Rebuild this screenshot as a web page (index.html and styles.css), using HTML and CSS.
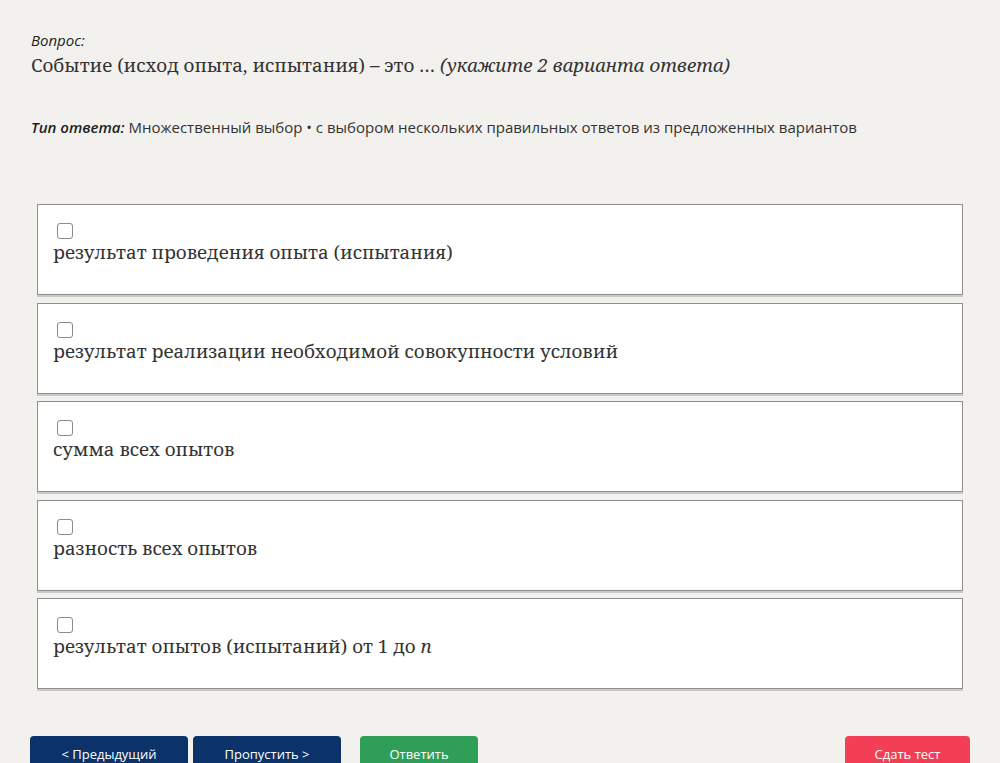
FILE: index.html
```html
<!DOCTYPE html>
<html lang="ru">
<head>
<meta charset="utf-8">
<link rel="stylesheet" href="styles.css">
</head>
<body>
<div class="page">
  <div class="q-label">Вопрос:</div>
  <div class="q-text">Событие (исход опыта, испытания) – это … <em>(укажите 2 варианта ответа)</em></div>
  <div class="q-type"><em>Тип ответа:</em> Множественный выбор • с выбором нескольких правильных ответов из предложенных вариантов</div>
  <div class="options">
    <label class="option"><span class="cb"></span><span class="opt-text">результат проведения опыта (испытания)</span></label>
    <label class="option"><span class="cb"></span><span class="opt-text">результат реализации необходимой совокупности условий</span></label>
    <label class="option"><span class="cb"></span><span class="opt-text">сумма всех опытов</span></label>
    <label class="option"><span class="cb"></span><span class="opt-text">разность всех опытов</span></label>
    <label class="option"><span class="cb"></span><span class="opt-text">результат опытов (испытаний) от 1 до <i>n</i></span></label>
  </div>
  <div class="buttons">
    <button class="btn btn-blue btn-prev">&lt; Предыдущий</button>
    <button class="btn btn-blue btn-skip">Пропустить &gt;</button>
    <button class="btn btn-green btn-answer">Ответить</button>
    <span class="spacer"></span>
    <button class="btn btn-red btn-submit">Сдать тест</button>
  </div>
</div>
</body>
</html>
```

FILE: styles.css
```css
html, body {
  margin: 0;
  padding: 0;
  background: #f2f1ee;
  height: 763px;
  overflow: hidden;
}
.page {
  padding: 31px 30px 0 31px;
  font-family: "Open Sans", "Noto Sans", sans-serif;
  color: #222;
}
.q-label {
  font-size: 15px;
  font-style: italic;
  font-weight: 500;
  line-height: 18px;
  color: #1e1e1e;
}
.q-text {
  font-family: "Noto Serif", "DejaVu Serif", "Liberation Serif", serif;
  font-size: 18.75px;
  line-height: 28px;
  margin-top: 2px;
  color: #333;
}
.q-type {
  font-size: 15px;
  line-height: 20px;
  margin-top: 38px;
  color: #333;
}
.q-type em {
  font-weight: 600;
  color: #1e1e1e;
}
.options {
  margin: 67px 7px 0 6px;
  display: flex;
  flex-direction: column;
  gap: 7.5px;
}
.option {
  box-sizing: border-box;
  height: 91px;
  background: #fff;
  border: 1px solid #8e8e8e;
  box-shadow: 0 2px 0 #c9c9c7;
  padding: 18px 15px 0 15px;
  display: flex;
  flex-direction: column;
  align-items: flex-start;
}
.cb {
  width: 14px;
  height: 14px;
  border: 1px solid #8a8a8a;
  border-radius: 3px;
  background: #fff;
  margin-left: 4px;
}
.opt-text {
  font-family: "Noto Serif", "DejaVu Serif", "Liberation Serif", serif;
  font-size: 18.75px;
  line-height: 24px;
  color: #333;
  margin-top: 1px;
}
.buttons {
  display: flex;
  margin: 47px 0 0 -1px;
  align-items: flex-start;
}
.btn {
  height: 36px;
  border: none;
  border-radius: 4px;
  color: #fff;
  font-family: "Open Sans", "Noto Sans", sans-serif;
  font-size: 13px;
  padding: 0;
  line-height: 20px;
}
.btn-blue { background: #0b3369; }
.btn-green { background: #2f9e57; }
.btn-red { background: #f33f55; }
.btn-prev { width: 158px; }
.btn-skip { width: 148px; margin-left: 5px; }
.btn-answer { width: 118px; margin-left: 19px; }
.spacer { flex: 1; }
.btn-submit { width: 125px; }
```
